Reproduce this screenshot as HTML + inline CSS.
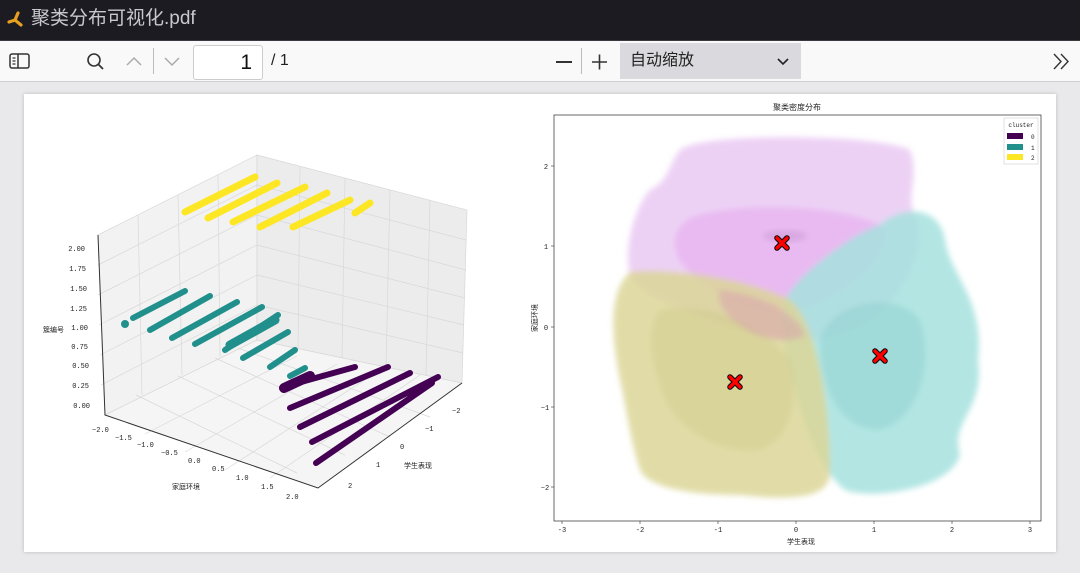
<!DOCTYPE html>
<html><head><meta charset="utf-8">
<style>
*{margin:0;padding:0;box-sizing:border-box}
body{width:1080px;height:573px;overflow:hidden;background:#e9e9ec;font-family:"Liberation Sans","Noto Sans CJK SC",sans-serif;position:relative}
#title{position:absolute;left:0;top:0;width:1080px;height:40px;background:#1c1b22;color:#c8c8cc;font-size:19px;line-height:38px;padding-left:31px}
#tb{position:absolute;left:0;top:40px;width:1080px;height:42px;background:#f9f9fa;border-top:1px solid #3a3a40;border-bottom:1px solid #cfcfd2}
.card{position:absolute;left:24px;top:94px;width:1032px;height:458px;background:#fff;box-shadow:0 0 4px rgba(0,0,0,.2)}
svg text{font-family:"Liberation Mono","Noto Sans CJK SC",monospace}
</style></head><body>
<div id="title">聚类分布可视化.pdf</div>
<svg style="position:absolute;left:6px;top:10px" width="20" height="20" viewBox="0 0 20 20"><path d="M12 3 L9 10 M3 12 L9 10 L15 15" stroke="#e8a020" stroke-width="3.2" fill="none" stroke-linecap="round"/></svg>
<div id="tb">
<svg style="position:absolute;left:8px;top:11px" width="24" height="20"><rect x="2" y="2" width="19" height="14" rx="2" fill="none" stroke="#333" stroke-width="1.5"/><line x1="10" y1="2" x2="10" y2="16" stroke="#333" stroke-width="1.5"/><path d="M4.5 6h3M4.5 9h3M4.5 12h3" stroke="#333" stroke-width="1.2"/></svg>
<svg style="position:absolute;left:84px;top:10px" width="24" height="22"><circle cx="10" cy="9" r="6" fill="none" stroke="#333" stroke-width="1.6"/><line x1="14.5" y1="13.5" x2="19" y2="18" stroke="#333" stroke-width="1.8"/></svg>
<svg style="position:absolute;left:124px;top:12px" width="24" height="18"><path d="M3 12 L10 5 L17 12" fill="none" stroke="#aaa" stroke-width="1.5"/></svg>
<div style="position:absolute;left:153px;top:7px;width:1px;height:26px;background:#bbb"></div>
<svg style="position:absolute;left:162px;top:12px" width="24" height="18"><path d="M3 5 L10 12 L17 5" fill="none" stroke="#aaa" stroke-width="1.5"/></svg>
<div style="position:absolute;left:193px;top:4px;width:70px;height:35px;background:#fff;border:1px solid #ccc;border-radius:3px;text-align:right;padding-right:10px;font-size:21px;line-height:33px;color:#111">1</div>
<div style="position:absolute;left:271px;top:11px;font-size:16px;color:#222">/ 1</div>
<div style="position:absolute;left:556px;top:20px;width:16px;height:1.6px;background:#333"></div>
<div style="position:absolute;left:581px;top:7px;width:1px;height:26px;background:#bbb"></div>
<svg style="position:absolute;left:590px;top:11px" width="20" height="20"><path d="M2 10h15M9.5 2.5v15" stroke="#333" stroke-width="1.6"/></svg>
<div style="position:absolute;left:620px;top:2px;width:181px;height:36px;background:#dadade;font-size:16px;line-height:36px;padding-left:10px;color:#222">自动缩放</div>
<svg style="position:absolute;left:776px;top:15px" width="14" height="12"><path d="M2 3 L7 8 L12 3" fill="none" stroke="#222" stroke-width="1.6"/></svg>
<svg style="position:absolute;left:1050px;top:10px" width="24" height="22"><path d="M4 3 L11 10.5 L4 18 M11 3 L18 10.5 L11 18" fill="none" stroke="#333" stroke-width="1.4"/></svg>
</div>
<div class="card"></div>
<svg style="position:absolute;left:0;top:0" width="1080" height="573">
<defs><filter id="bl"><feGaussianBlur stdDeviation="3"/></filter></defs>
<g stroke="#d8d8d8" stroke-width="0.7" fill="none">
<polygon points="98,235 257,155 257,340 105,415" fill="#f2f2f2"/>
<polygon points="257,155 467,210 462,383 257,340" fill="#ececec"/>
<polygon points="105,415 257,340 462,383 318,488" fill="#f5f5f5"/>
<path d="M138,215 L142,395 M178,195 L182,375 M218,175 L220,357 M98,265 L257,185 M98,295 L257,215 M99,325 L257,245 M100,355 L257,275 M101,385 L257,305"/>
<path d="M300,166 L298,349 M345,178 L342,358 M390,190 L386,367 M430,200 L426,375 M257,185 L466,240 M257,215 L466,270 M257,245 L465,298 M257,275 L464,325 M257,305 L463,353"/>
<path d="M145,434 L297,356 M185,452 L337,364 M225,470 L377,372 M270,478 L420,375 M297,473 L136,395 M345,455 L178,376 M390,437 L215,358 M430,417 L238,348"/>
</g>
<path d="M98,235 L105,415 L318,488 L462,383" stroke="#333" stroke-width="1" fill="none"/>
<g stroke-linecap="round" fill="none" stroke-width="7" stroke="#fde725">
<path d="M185,212 L255,177 M208,218 L277,183 M233,222 L305,187 M260,227 L327,193 M293,227 L350,200 M355,213 L370,203"/>
</g>
<g stroke-linecap="round" fill="none" stroke-width="6" stroke="#21908c">
<path d="M133,318 L185,291 M150,330 L210,296 M172,338 L237,302 M195,344 L262,307 M225,350 L278,315 M243,358 L288,332 M270,367 L295,350 M290,376 L305,368"/>
<path d="M230,345 L275,320" stroke-width="9"/>
<circle cx="125" cy="324" r="2" stroke-width="4"/>
</g>
<g stroke-linecap="round" fill="none" stroke-width="6" stroke="#440154">
<path d="M283,387 L355,367 M290,408 L388,367 M300,427 L410,373 M312,442 L438,377 M316,463 L432,383"/>
<path d="M284,388 L310,376" stroke-width="10"/>
</g>
<g font-size="7" fill="#222">
<text x="85" y="251" text-anchor="end">2.00</text><text x="86" y="271" text-anchor="end">1.75</text><text x="87" y="291" text-anchor="end">1.50</text><text x="87" y="311" text-anchor="end">1.25</text><text x="88" y="330" text-anchor="end">1.00</text><text x="88" y="349" text-anchor="end">0.75</text><text x="89" y="368" text-anchor="end">0.50</text><text x="89" y="388" text-anchor="end">0.25</text><text x="90" y="408" text-anchor="end">0.00</text>
<text x="43" y="332">簇编号</text>
<text x="92" y="432">−2.0</text><text x="115" y="440">−1.5</text><text x="137" y="447">−1.0</text><text x="161" y="455">−0.5</text><text x="188" y="463">0.0</text><text x="212" y="471">0.5</text><text x="236" y="480">1.0</text><text x="261" y="489">1.5</text><text x="286" y="499">2.0</text>
<text x="172" y="489">家庭环境</text>
<text x="452" y="413">−2</text><text x="425" y="431">−1</text><text x="400" y="449">0</text><text x="376" y="467">1</text><text x="348" y="488">2</text>
<text x="404" y="468">学生表现</text>
</g>
<rect x="554" y="115" width="487" height="406" fill="#fff" stroke="#444" stroke-width="0.8"/>
<g filter="url(#bl)">
<path d="M680,150 C700,132 880,134 910,150 C920,175 905,200 915,215 C930,250 900,300 870,320 C830,345 780,345 740,330 C690,310 640,300 630,275 C622,240 640,200 650,190 C670,180 668,165 680,150Z" fill="#e8c6f3" opacity="0.8"/>
<path d="M690,218 C740,200 850,205 885,228 C890,260 840,300 790,312 C740,312 700,285 680,262 C670,240 675,228 690,218Z" fill="#e6a8ee" opacity="0.55"/>
<path d="M785,300 C800,270 860,230 880,225 C900,205 940,205 945,240 C950,275 985,300 978,360 C985,410 950,420 960,455 C950,490 870,500 845,490 C820,470 805,430 795,390 C785,360 780,330 785,300Z" fill="#a6e2de" opacity="0.85"/>
<path d="M820,340 C830,300 900,290 920,320 C935,360 920,420 880,430 C840,430 820,390 820,340Z" fill="#8ccfcb" opacity="0.45"/>
<path d="M630,272 C660,268 740,275 790,300 C815,320 830,400 830,470 C832,500 790,500 740,495 C700,495 650,490 640,470 C630,440 625,400 620,380 C610,330 610,290 630,272Z" fill="#dcd698" opacity="0.85"/>
<path d="M660,310 C700,300 760,320 790,360 C800,400 790,440 760,450 C720,455 680,430 665,400 C650,360 645,330 660,310Z" fill="#cdc786" opacity="0.4"/>
<path d="M720,290 C760,295 795,310 805,335 C790,345 760,340 740,325 C725,315 715,300 720,290Z" fill="#d89ab0" opacity="0.45"/>
</g>
<ellipse cx="785" cy="236" rx="22" ry="6" fill="#c090c8" opacity="0.4" filter="url(#bl)"/>
<g fill="none" stroke-linecap="round">
<g stroke="#000" stroke-width="5.5"><path d="M777,238 L787,248 M787,238 L777,248 M730,377 L740,387 M740,377 L730,387 M875,351 L885,361 M885,351 L875,361"/></g>
<g stroke="#f00" stroke-width="3.5"><path d="M777,238 L787,248 M787,238 L777,248 M730,377 L740,387 M740,377 L730,387 M875,351 L885,361 M885,351 L875,361"/></g>
</g>
<g font-size="7" fill="#222" stroke="#333" stroke-width="0.6">
<line x1="562" y1="521" x2="562" y2="524"/><line x1="640" y1="521" x2="640" y2="524"/><line x1="718" y1="521" x2="718" y2="524"/><line x1="796" y1="521" x2="796" y2="524"/><line x1="874" y1="521" x2="874" y2="524"/><line x1="952" y1="521" x2="952" y2="524"/><line x1="1030" y1="521" x2="1030" y2="524"/>
<line x1="551" y1="166" x2="554" y2="166"/><line x1="551" y1="246" x2="554" y2="246"/><line x1="551" y1="327" x2="554" y2="327"/><line x1="551" y1="407" x2="554" y2="407"/><line x1="551" y1="487" x2="554" y2="487"/>
</g>
<g font-size="7" fill="#222" text-anchor="middle">
<text x="562" y="532">-3</text><text x="640" y="532">-2</text><text x="718" y="532">-1</text><text x="796" y="532">0</text><text x="874" y="532">1</text><text x="952" y="532">2</text><text x="1030" y="532">3</text>
<text x="801" y="544">学生表现</text><text x="797" y="110" font-size="8">聚类密度分布</text>
<text x="546" y="169">2</text><text x="546" y="249">1</text><text x="546" y="330">0</text><text x="545" y="410">−1</text><text x="545" y="490">−2</text>
<text transform="translate(537,318) rotate(-90)">家庭环境</text>
</g>
<rect x="1004" y="118" width="34" height="46" fill="#fff" stroke="#ccc" stroke-width="0.6"/>
<text x="1021" y="127" font-size="6" text-anchor="middle" fill="#222">cluster</text>
<rect x="1007" y="133" width="16" height="6" fill="#440154"/><rect x="1007" y="144" width="16" height="6" fill="#21908c"/><rect x="1007" y="154" width="16" height="6" fill="#fde725"/>
<g font-size="6" fill="#222"><text x="1031" y="139">0</text><text x="1031" y="150">1</text><text x="1031" y="160">2</text></g>
</svg>
</body></html>
